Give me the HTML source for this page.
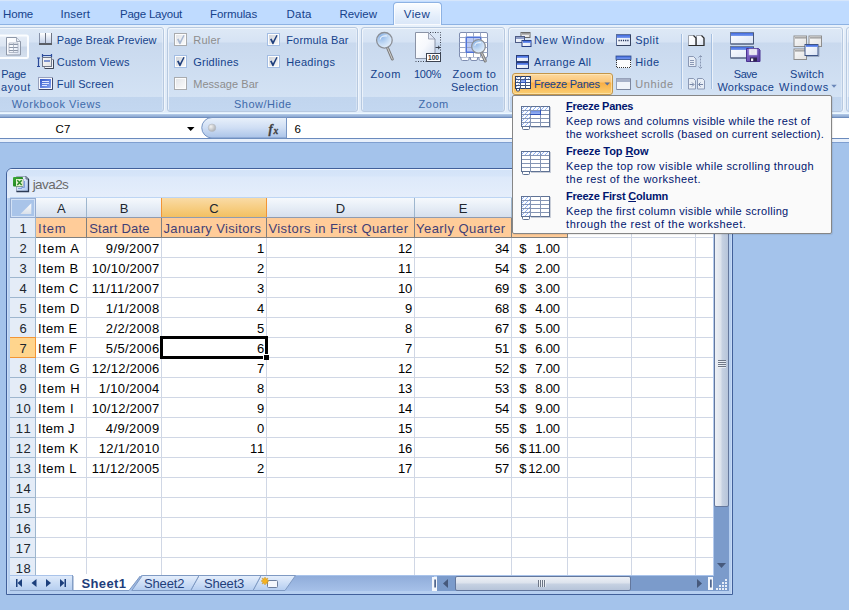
<!DOCTYPE html>
<html><head><meta charset="utf-8"><title>Excel</title>
<style>
*{box-sizing:border-box;margin:0;padding:0}
html,body{width:849px;height:610px;overflow:hidden}
body{position:relative;background:#a4c3eb;font-family:"Liberation Sans",sans-serif;font-size:11px;color:#15428b}
.a{position:absolute}
.t{position:absolute;white-space:nowrap;z-index:3}
svg{position:absolute;overflow:visible}
#tabs{left:0;top:0;width:849px;height:25px;background:linear-gradient(#d6e6fb 0,#d6e6fb 1px,#c3ddff 1px,#bfdbff 3px,#bfdbff 100%)}
#vtab{left:393px;top:2px;width:49px;height:23px;border:1px solid #8db2e3;border-bottom:none;border-radius:4px 4px 0 0;background:linear-gradient(#fbfdff,#e4eefb 60%,#d9e6f7);box-shadow:inset 0 0 0 1px rgba(255,255,255,.8)}
#ribbon{left:0;top:24px;width:849px;height:89px;background:linear-gradient(#e8f1fb,#dfeaf8 20px,#e1ecf9);border-top:1px solid #8db2e3}
.grp{position:absolute;top:27px;height:85px;border:1px solid #b7c9e0;border-radius:3px;background:linear-gradient(#dee9f6 0,#d6e3f4 14px,#c9d9ee 15px,#d3e2f4 69px,#c1d5ee 69px,#c3d7f0 100%);box-shadow:inset 1px 1px 0 rgba(255,255,255,.6),inset -1px 0 0 rgba(255,255,255,.3),1px 0 0 rgba(255,255,255,.55)}
#below{left:0;top:112px;width:849px;height:6px;background:linear-gradient(#e3effd 0,#e3effd 1px,#ecf8ff 1px,#ecf8ff 2px,#b9cfec 2px,#a3bcdf 3px,#8ba7d0 5px,#6f8ebf 5px,#6f8ebf 6px)}
#fbar{left:0;top:118px;width:849px;height:25px;background:#fff;border-bottom:1px solid #7f9fd0;box-shadow:inset 0 -3px 0 #e8f0fb,inset 0 -4px 0 #6a8abd}
.cb{position:absolute;width:13px;height:13px;border:1px solid #8e8f8f;background:linear-gradient(135deg,#dcdfe3,#f6f6f6);box-shadow:inset 0 0 0 1px #f4f4f4, inset 0 0 0 2px #d3d8de}
.cb.dis{border-color:#b8bcc2}
.sep{position:absolute;width:1px;top:34px;height:55px;background:#a5bfe0;box-shadow:1px 0 0 rgba(255,255,255,.6)}
#win{left:6px;top:168px;width:727px;height:427px;border:1px solid #41609a;border-radius:6px 6px 0 0;background:#b6cff0;box-shadow:inset 1px 0 0 #c6daf6,inset -1px 0 0 #c6daf6}
#title{left:7px;top:169px;width:725px;height:29px;border-radius:5px 5px 0 0;background:linear-gradient(#f0f5fd 0,#f0f5fd 1px,#d3e3f8 1px,#d6e5f9 7px,#dde9fa 8px,#e5eefb 28px)}
#grid{left:10px;top:197px;width:704px;height:378px;background:#fff;overflow:hidden}
#menu{left:512px;top:95px;width:320px;height:139px;background:#fafafa;border:1px solid #868686;border-radius:2px;z-index:4;box-shadow:1px 1px 1px rgba(0,0,0,.08)}
#fz{left:512px;top:73px;width:101px;height:22px;border:1px solid #c3964a;border-radius:3px;background:linear-gradient(#fcd9a0 0,#fbc678 8px,#f9ae45 9px,#fbcf74 100%);box-shadow:inset 0 0 0 1px rgba(255,240,200,.55)}
</style></head><body>
<div id="tabs" class="a"></div>
<div id="ribbon" class="a"></div>
<div id="vtab" class="a"></div>
<!-- groups -->
<div class="grp" style="left:-6px;width:170px"></div>
<div class="grp" style="left:167px;width:191px"></div>
<div class="grp" style="left:361px;width:144px"></div>
<div class="grp" style="left:508px;width:335px"></div>
<div class="grp" style="left:846px;width:40px"></div>
<div id="fz" class="a"></div>
<!-- checkboxes -->
<div class="sep" style="left:681px"></div>
<div class="sep" style="left:711px"></div>
<svg width="849" height="120" viewBox="0 0 849 120" style="left:0;top:0;z-index:2">
<defs>
<linearGradient id="tbl" x1="0" y1="0" x2="0" y2="1"><stop offset="0" stop-color="#3f68dd"/><stop offset="1" stop-color="#7c9df0"/></linearGradient>
<linearGradient id="tbg" x1="0" y1="0" x2="0" y2="1"><stop offset="0" stop-color="#8d8d8d"/><stop offset="1" stop-color="#c4c4c4"/></linearGradient>
<linearGradient id="wb" x1="0" y1="0" x2="1" y2="1"><stop offset="0" stop-color="#ffffff"/><stop offset="1" stop-color="#d9e3f5"/></linearGradient>
<linearGradient id="wbg" x1="0" y1="0" x2="1" y2="1"><stop offset="0" stop-color="#fafafa"/><stop offset="1" stop-color="#e2e2e2"/></linearGradient>
<linearGradient id="pg" x1="0" y1="0" x2="1" y2="1"><stop offset="0" stop-color="#ffffff"/><stop offset="0.5" stop-color="#f7f9fd"/><stop offset="1" stop-color="#d5dff0"/></linearGradient>
<radialGradient id="lens" cx="0.3" cy="0.25" r="0.9"><stop offset="0" stop-color="#8db5e8"/><stop offset="0.55" stop-color="#c6dcf5"/><stop offset="1" stop-color="#eef5fd"/></radialGradient>
<linearGradient id="fsb" x1="0" y1="0" x2="1" y2="1"><stop offset="0" stop-color="#3558c8"/><stop offset="1" stop-color="#86a6f2"/></linearGradient>
<linearGradient id="bluecell" x1="0" y1="0" x2="0" y2="1"><stop offset="0" stop-color="#5f84e6"/><stop offset="1" stop-color="#a9c0f5"/></linearGradient>
<linearGradient id="plb" x1="0" y1="0" x2="0" y2="1"><stop offset="0" stop-color="#e6edf7"/><stop offset="0.48" stop-color="#dbe5f2"/><stop offset="0.5" stop-color="#c9d6e8"/><stop offset="1" stop-color="#d6e1ef"/></linearGradient>
<pattern id="hat" width="4" height="4" patternUnits="userSpaceOnUse"><rect width="4" height="4" fill="#fafcff"/><path d="M-1 5 L5 -1 M-1 1 L1 -1 M3 5 L5 3" stroke="#86a8f0" stroke-width="0.9" shape-rendering="geometricPrecision"/></pattern>
<linearGradient id="pbp" x1="0" y1="0" x2="0" y2="1"><stop offset="0" stop-color="#ffffff"/><stop offset="1" stop-color="#c3d0e8"/></linearGradient>
<linearGradient id="flop" x1="0" y1="0" x2="1" y2="1"><stop offset="0" stop-color="#8a6fd0"/><stop offset="1" stop-color="#5a3fa0"/></linearGradient>
<linearGradient id="cbg" x1="0" y1="0" x2="1" y2="1"><stop offset="0" stop-color="#cfd3da"/><stop offset="1" stop-color="#f7f7f7"/></linearGradient>
</defs>
<rect x="-4" y="35.5" width="32" height="22.5" fill="url(#plb)" stroke="#fbfdff" stroke-width="2" rx="1.5"/>
<path d="M6.5 37.5 h10 l4 4 v13.5 h-14 z" fill="url(#pg)" stroke="#8d97a8"/>
<path d="M16.5 37.5 v4 h4" fill="#e6ebf3" stroke="#8d97a8" stroke-width=".8"/>
<path d="M9 44.5 H18" stroke="#8c96a8" stroke-width="1"/>
<path d="M9 47.5 H18" stroke="#8c96a8" stroke-width="1"/>
<path d="M9 50.5 H18" stroke="#8c96a8" stroke-width="1"/>
<path d="M9 43 V52.5 M13.5 43 V52.5 M18 43 V52.5 M9 43 H18 M9 52.5 H18" stroke="#a3acbc" stroke-width=".8" fill="none"/>
<rect x="39" y="33" width="13" height="12" fill="#6d7484" shape-rendering="crispEdges"/>
<rect x="40" y="33" width="5" height="10" fill="url(#pbp)" shape-rendering="crispEdges"/>
<rect x="46" y="33" width="5" height="10" fill="url(#pbp)" shape-rendering="crispEdges"/>
<rect x="39" y="43" width="13" height="2" fill="#5a5e66" shape-rendering="crispEdges"/>
<rect x="39" y="33" width="1" height="10" fill="#8792a8" shape-rendering="crispEdges"/>
<path d="M38.5 58 v8.5 M37 58 h3 M37 66.5 h3" stroke="#2b4a9a" stroke-width="1.2" fill="none"/>
<path d="M42.5 55.5 h9 M42.5 54 v3 M51.5 54 v3" stroke="#2b4a9a" stroke-width="1.2" fill="none"/>
<rect x="44.5" y="59.5" width="9" height="9" fill="#f2f4f8" stroke="#8d95a6" stroke-width="1"/>
<path d="M53.5 60 V68.5 H45" stroke="#3e4657" fill="none"/>
<rect x="42.5" y="57.5" width="9" height="9" fill="url(#wbg)" stroke="#6f7788" stroke-width="1"/>
<rect x="44" y="60" width="6" height="2" fill="#7f95cf" shape-rendering="crispEdges"/>
<rect x="38.5" y="77.5" width="14" height="12" fill="#f8f9fd" stroke="#97a1bd" stroke-width="1"/>
<path d="M52.5 78 V89.5 H39" stroke="#3f4a6e" fill="none"/>
<rect x="40" y="79" width="11" height="9" fill="url(#fsb)" shape-rendering="crispEdges"/>
<rect x="42" y="81" width="7" height="1" fill="#dfe8ff" shape-rendering="crispEdges"/>
<rect x="42" y="83" width="7" height="1" fill="#dfe8ff" shape-rendering="crispEdges"/>
<rect x="42" y="85" width="5" height="1" fill="#dfe8ff" shape-rendering="crispEdges"/>
<rect x="174.5" y="33.5" width="12" height="12" fill="#fdfdfd" stroke="#a9abae" stroke-width="1"/><rect x="176" y="35" width="9" height="9" fill="url(#cbg)" shape-rendering="crispEdges" opacity=".55"/><path d="M177 39.2 l1.6 -0.6 l1.4 2.6 l3.4 -6.2 l1.2 0.6 l-4.2 8.6 h-0.9 z" fill="#aab9d2"/>
<rect x="174.5" y="55.5" width="12" height="12" fill="#fdfdfd" stroke="#a3bde3" stroke-width="1"/><rect x="176" y="57" width="9" height="9" fill="url(#cbg)" shape-rendering="crispEdges"/><path d="M177 61.2 l1.6 -0.6 l1.4 2.6 l3.4 -6.2 l1.2 0.6 l-4.2 8.6 h-0.9 z" fill="#1f3f7d"/>
<rect x="174.5" y="77.5" width="12" height="12" fill="#fdfdfd" stroke="#a9abae" stroke-width="1"/><rect x="176" y="79" width="9" height="9" fill="url(#cbg)" shape-rendering="crispEdges" opacity=".55"/>
<rect x="267.5" y="33.5" width="12" height="12" fill="#fdfdfd" stroke="#a3bde3" stroke-width="1"/><rect x="269" y="35" width="9" height="9" fill="url(#cbg)" shape-rendering="crispEdges"/><path d="M270 39.2 l1.6 -0.6 l1.4 2.6 l3.4 -6.2 l1.2 0.6 l-4.2 8.6 h-0.9 z" fill="#1f3f7d"/>
<rect x="267.5" y="55.5" width="12" height="12" fill="#fdfdfd" stroke="#a3bde3" stroke-width="1"/><rect x="269" y="57" width="9" height="9" fill="url(#cbg)" shape-rendering="crispEdges"/><path d="M270 61.2 l1.6 -0.6 l1.4 2.6 l3.4 -6.2 l1.2 0.6 l-4.2 8.6 h-0.9 z" fill="#1f3f7d"/>
<path d="M387.4 47.5 L392.3 59" stroke="#7d7d7d" stroke-width="3" stroke-linecap="round"/><path d="M387.4 47.5 L392.3 59" stroke="#d0d0d0" stroke-width="1" stroke-linecap="round"/><circle cx="384.4" cy="40.3" r="7.8" fill="url(#lens)" stroke="#8b8f96" stroke-width="1.3"/><path d="M380.1 39.5 Q380.5 35.2 387.1 36.0" stroke="#fff" stroke-width="1.2" fill="none" opacity=".75"/>
<path d="M415.5 32.5 h13 l6.5 6.5 v19.5 h-19.5 z" fill="url(#pg)" stroke="#8a93a6"/>
<path d="M428.5 32.5 v6.5 h6.5 z" fill="#e1e8f5" stroke="#8a93a6" stroke-width=".8"/>
<path d="M430 32.5 H440.5 V53" stroke="#3c4350" stroke-width="1" stroke-dasharray="1 1.5" fill="none"/>
<path d="M415.5 61.5 H426" stroke="#3c4350" stroke-width="1" stroke-dasharray="1 1.5" fill="none"/>
<path d="M435.5 47.5 h4.5 M438 45.8 l1.8 1.7 -1.8 1.7" stroke="#3c4350" stroke-width="1" fill="none"/>
<rect x="426.5" y="53.5" width="14" height="8" fill="#fff" stroke="#3c4350" stroke-width="1"/>
<text x="433.5" y="60.3" font-family="Liberation Sans, sans-serif" font-size="7" font-weight="bold" fill="#2a2f3a" text-anchor="middle" textLength="11" lengthAdjust="spacingAndGlyphs">100</text>
<rect x="459.5" y="32.5" width="28" height="25" fill="#fff" stroke="#7e8db0" stroke-width="1" rx="1.5"/>
<rect x="466" y="37" width="15" height="15" fill="#b9c9f5" stroke="#4f73d9" stroke-width="1"/>
<path d="M466.5 32.5 V57.5" stroke="#9aa7c4" stroke-width="1"/>
<path d="M473.5 32.5 V57.5" stroke="#9aa7c4" stroke-width="1"/>
<path d="M480.5 32.5 V57.5" stroke="#9aa7c4" stroke-width="1"/>
<path d="M459.5 37.5 H487.5" stroke="#9aa7c4" stroke-width="1"/>
<path d="M459.5 42.5 H487.5" stroke="#9aa7c4" stroke-width="1"/>
<path d="M459.5 47.5 H487.5" stroke="#9aa7c4" stroke-width="1"/>
<path d="M459.5 52.5 H487.5" stroke="#9aa7c4" stroke-width="1"/>
<rect x="466.5" y="37.5" width="14" height="15" fill="none" stroke="#4f73d9" stroke-width="1"/>
<path d="M461 57.5 v1.5 q0 1.5 1.5 1.5 h5 q1.5 0 1.5 -1.5 v-1.5 M470.5 57.5 v1.5 q0 1.5 1.5 1.5 h4 q1.5 0 1.5 -1.5 v-1.5 M479 57.5 v1.5 q0 1.5 1.5 1.5 h4 q1.5 0 1.5 -1.5 v-1.5" fill="#fff" stroke="#7e8db0"/>
<path d="M481.4 52.6 L485.3 61" stroke="#7d7d7d" stroke-width="3" stroke-linecap="round"/><path d="M481.4 52.6 L485.3 61" stroke="#d0d0d0" stroke-width="1" stroke-linecap="round"/><circle cx="478.5" cy="46.4" r="6.8" fill="url(#lens)" stroke="#8b8f96" stroke-width="1.3"/><path d="M474.8 45.7 Q475.1 42.0 480.9 42.7" stroke="#fff" stroke-width="1.2" fill="none" opacity=".75"/>
<g><rect x="521.0" y="32.5" width="9" height="5" fill="url(#wbg)" stroke="#6b6b6b" stroke-width="1"/><rect x="521.5" y="33" width="8" height="2" fill="url(#tbg)" shape-rendering="crispEdges"/></g>
<g><rect x="515.5" y="36.5" width="9" height="6" fill="url(#wb)" stroke="#4d5c86" stroke-width="1"/><rect x="516" y="37" width="8" height="2" fill="#8f9fc8" shape-rendering="crispEdges"/></g>
<g><rect x="522.0" y="40.5" width="9" height="6" fill="url(#wb)" stroke="#263f86" stroke-width="1"/><rect x="522.5" y="41" width="8" height="2" fill="url(#tbl)" shape-rendering="crispEdges"/></g>
<g><rect x="516.5" y="55.5" width="12" height="6" fill="url(#wb)" stroke="#2a3f7a" stroke-width="1"/><rect x="517" y="56" width="11" height="2" fill="url(#tbl)" shape-rendering="crispEdges"/></g>
<g><rect x="516.5" y="62.5" width="12" height="6" fill="url(#wb)" stroke="#2a3f7a" stroke-width="1"/><rect x="517" y="63" width="11" height="2" fill="url(#tbl)" shape-rendering="crispEdges"/></g>
<g transform="translate(515,76)" shape-rendering="crispEdges"><rect x="0" y="0" width="16" height="13" fill="#fff"/><rect x="0" y="0" width="16" height="3" fill="url(#hat)"/><rect x="0" y="0" width="5" height="13" fill="url(#hat)"/><rect x="5" y="3" width="6" height="4" fill="url(#bluecell)"/><rect x="0" y="0" width="16" height="1" fill="#2a3d66"/><rect x="0" y="3" width="16" height="1" fill="#46587f"/><rect x="0" y="6" width="16" height="1" fill="#46587f"/><rect x="0" y="9" width="16" height="1" fill="#46587f"/><rect x="0" y="12" width="16" height="1" fill="#2a3d66"/><rect x="0" y="0" width="1" height="13" fill="#2a3d66"/><rect x="5" y="0" width="1" height="13" fill="#46587f"/><rect x="10" y="0" width="1" height="13" fill="#46587f"/><rect x="15" y="0" width="1" height="13" fill="#2a3d66"/><rect x="5" y="6" width="6" height="1" fill="#3355b8"/><rect x="10" y="3" width="1" height="4" fill="#3355b8"/><path d="M1.5 13 v1.0 q0 1 1 1 h1 q1 0 1 -1 v-1.0" fill="#fff" stroke="#2a3d66" shape-rendering="geometricPrecision"/></g>
<polygon points="604.5,82.5 610,82.5 607.25,85.5" fill="#56709f"/>
<g><rect x="616.5" y="34.5" width="14" height="11" fill="url(#wb)" stroke="#5b6f9c" stroke-width="1"/><rect x="617" y="35" width="13" height="3" fill="url(#tbl)" shape-rendering="crispEdges"/><path d="M630.5 35 V45.5 H617" stroke="#36425f" fill="none"/></g>
<path d="M618.5 40.5 H629" stroke="#1d2c55" stroke-width="1.3" stroke-dasharray="1.2 1"/>
<rect x="616" y="56" width="15" height="3.5" fill="url(#tbl)" stroke="#2f4c8a" stroke-width="0.8"/>
<path d="M616.5 60 V67.5 H630.5 V60" stroke="#333" stroke-width="1" stroke-dasharray="1 1" fill="#fcfcfd" shape-rendering="crispEdges"/>
<g><rect x="616.5" y="78.5" width="14" height="11" fill="#f1f4fa" stroke="#97a2ba" stroke-width="1"/><rect x="617" y="79" width="13" height="3" fill="#a7b1c8" shape-rendering="crispEdges"/><path d="M630.5 79 V89.5 H617" stroke="#7c879f" fill="none"/></g>
<path d="M688.5 35.5 h5 l2.5 2.5 v7.5 h-7.5 z M696.5 35.5 h5 l2.5 2.5 v7.5 h-7.5 z" fill="url(#pg)" stroke="#8a8f99" stroke-width=".8"/>
<path d="M693.5 35.5 l2.5 2.5 v7.5 h-7.5 M701.5 35.5 l2.5 2.5 v7.5 h-7.5" fill="none" stroke="#2e2e2e" stroke-width="1.2"/>
<g opacity=".8"><path d="M688.5 56.5 h5 l2.5 2.5 v7.5 h-7.5 z" fill="#eef2f8" stroke="#7a88a6"/><path d="M690 60.5 h4 M690 62.5 h4 M690 64.5 h4" stroke="#7a88a6"/><path d="M700.5 55.5 V68.5 M698.5 57.5 l2 -2 2 2 M698.5 66.5 l2 2 2 -2" stroke="#7a88a6" fill="none" stroke-dasharray="2 1"/></g>
<g opacity=".8"><path d="M688.5 78.5 h5 l2 2 v8.5 h-7 z M697.5 78.5 h5 l2 2 v8.5 h-7 z" fill="#eef2f8" stroke="#7a88a6"/><path d="M689.5 84.5 h4 M692 82.5 l2 2 -2 2 M703 84.5 h-4 M700.5 82.5 l-2 2 2 2" stroke="#5f6f92" fill="none"/></g>
<g><rect x="730.5" y="32.5" width="23" height="11.5" fill="url(#wb)" stroke="#6a7a9a" stroke-width="1"/><rect x="731" y="33" width="22" height="3" fill="url(#tbl)" shape-rendering="crispEdges"/><path d="M753.5 33 V44.0 H731" stroke="#4a5877" fill="none"/></g>
<g><rect x="730.5" y="46.5" width="23" height="11.5" fill="url(#wb)" stroke="#6a7a9a" stroke-width="1"/><rect x="731" y="47" width="22" height="3" fill="url(#tbl)" shape-rendering="crispEdges"/><path d="M753.5 47 V58.0 H731" stroke="#4a5877" fill="none"/></g>
<path d="M746.5 48.5 h12 l1.5 1.5 v11.5 h-13.5 z" fill="url(#flop)" stroke="#4a3290"/>
<rect x="749" y="49" width="8" height="6" fill="#f6f4fb" stroke="#b9aee0" stroke-width="0.6"/>
<path d="M750.5 51 h5 M750.5 53 h5" stroke="#c9c4dc" stroke-width=".7"/>
<rect x="750" y="57.5" width="7" height="4" fill="#2e2350"/>
<rect x="751" y="58.5" width="2.2" height="2.6" fill="#f4f2fa"/>
<g><rect x="794.0" y="36.0" width="12.5" height="10.5" fill="url(#wbg)" stroke="#8e8e8e" stroke-width="1"/><rect x="794.5" y="36.5" width="11.5" height="2" fill="url(#tbg)" shape-rendering="crispEdges"/></g>
<g><rect x="809.0" y="36.0" width="12.5" height="10.5" fill="url(#wbg)" stroke="#8e8e8e" stroke-width="1"/><rect x="809.5" y="36.5" width="11.5" height="2" fill="url(#tbg)" shape-rendering="crispEdges"/></g>
<g><rect x="794.0" y="49.0" width="12.5" height="10.5" fill="url(#wbg)" stroke="#8e8e8e" stroke-width="1"/><rect x="794.5" y="49.5" width="11.5" height="2" fill="url(#tbg)" shape-rendering="crispEdges"/></g>
<g><rect x="805.0" y="44.5" width="13" height="11" fill="url(#wb)" stroke="#3d5486" stroke-width="1"/><rect x="805.5" y="45" width="12" height="2" fill="url(#tbl)" shape-rendering="crispEdges"/></g>
<path d="M806 56.5 H819 V45.5" stroke="#6b7894" stroke-width="1" fill="none" opacity=".5"/>
<polygon points="831.3,84.8 836.7,84.8 834,87.8" fill="#6a86b8"/>
</svg>
<div id="below" class="a"></div>
<div id="fbar" class="a"></div>
<svg width="849" height="150" viewBox="0 0 849 150" style="left:0;top:0;z-index:2">
<defs><linearGradient id="pill" x1="0" y1="0" x2="0" y2="1"><stop offset="0" stop-color="#e9f1fb"/><stop offset="0.5" stop-color="#cfdef4"/><stop offset="1" stop-color="#aac3e8"/></linearGradient><radialGradient id="knob" cx=".35" cy=".35" r=".8"><stop offset="0" stop-color="#f2f2f2"/><stop offset="1" stop-color="#a0a4aa"/></radialGradient></defs>
<polygon points="187,127 194.5,127 190.7,131" fill="#000"/>
<path d="M286.5 117.5 H212 a10 10 0 0 0 0 20.5 H286.5 z" fill="url(#pill)" stroke="#7795c4"/>
<circle cx="212" cy="127.8" r="3.8" fill="url(#knob)" stroke="#b4bac4" stroke-width=".6"/>
<text x="268.5" y="132.5" font-family="Liberation Serif, serif" font-style="italic" font-weight="bold" font-size="12.5" fill="#3f3f3f" stroke="#3f3f3f" stroke-width=".3">f</text>
<text x="273.5" y="133.5" font-family="Liberation Serif, serif" font-style="italic" font-weight="bold" font-size="9.5" fill="#3f3f3f" stroke="#3f3f3f" stroke-width=".3">x</text>
</svg>
<div id="win" class="a"></div>
<div id="title" class="a"></div>
<div id="grid" class="a">
<svg width="704" height="379" viewBox="0 0 704 379" shape-rendering="crispEdges" style="left:0;top:0">
<defs><linearGradient id="hg" x1="0" y1="0" x2="0" y2="1"><stop offset="0" stop-color="#f7fafd"/><stop offset="0.5" stop-color="#e6edf6"/><stop offset="1" stop-color="#d5deeb"/></linearGradient><linearGradient id="og" x1="0" y1="0" x2="0" y2="1"><stop offset="0" stop-color="#f9dba6"/><stop offset="0.45" stop-color="#f7cf86"/><stop offset="1" stop-color="#f2c062"/></linearGradient><linearGradient id="cg" x1="0" y1="0" x2="1" y2="1"><stop offset="0" stop-color="#a9c4e9"/><stop offset="1" stop-color="#b9cfee"/></linearGradient><linearGradient id="tri" x1="0" y1="0" x2="0" y2="1"><stop offset="0" stop-color="#fdfdfe"/><stop offset="1" stop-color="#d9e0ea"/></linearGradient></defs>
<rect x="76" y="21" width="1" height="379" fill="#d0d7e5"/>
<rect x="151" y="21" width="1" height="379" fill="#d0d7e5"/>
<rect x="256" y="21" width="1" height="379" fill="#d0d7e5"/>
<rect x="404" y="21" width="1" height="379" fill="#d0d7e5"/>
<rect x="501" y="21" width="1" height="379" fill="#d0d7e5"/>
<rect x="557" y="21" width="1" height="379" fill="#d0d7e5"/>
<rect x="621" y="21" width="1" height="379" fill="#d0d7e5"/>
<rect x="685" y="21" width="1" height="379" fill="#d0d7e5"/>
<rect x="26" y="40" width="704" height="1" fill="#d0d7e5"/>
<rect x="26" y="60" width="704" height="1" fill="#d0d7e5"/>
<rect x="26" y="80" width="704" height="1" fill="#d0d7e5"/>
<rect x="26" y="100" width="704" height="1" fill="#d0d7e5"/>
<rect x="26" y="120" width="704" height="1" fill="#d0d7e5"/>
<rect x="26" y="140" width="704" height="1" fill="#d0d7e5"/>
<rect x="26" y="160" width="704" height="1" fill="#d0d7e5"/>
<rect x="26" y="180" width="704" height="1" fill="#d0d7e5"/>
<rect x="26" y="200" width="704" height="1" fill="#d0d7e5"/>
<rect x="26" y="220" width="704" height="1" fill="#d0d7e5"/>
<rect x="26" y="240" width="704" height="1" fill="#d0d7e5"/>
<rect x="26" y="260" width="704" height="1" fill="#d0d7e5"/>
<rect x="26" y="280" width="704" height="1" fill="#d0d7e5"/>
<rect x="26" y="300" width="704" height="1" fill="#d0d7e5"/>
<rect x="26" y="320" width="704" height="1" fill="#d0d7e5"/>
<rect x="26" y="340" width="704" height="1" fill="#d0d7e5"/>
<rect x="26" y="360" width="704" height="1" fill="#d0d7e5"/>
<rect x="0" y="0" width="704" height="21" fill="url(#hg)"/>
<rect x="0" y="0" width="704" height="1" fill="#bdd5f3"/>
<rect x="0" y="20" width="704" height="1" fill="#9eb6ce"/>
<rect x="25" y="1" width="1" height="19" fill="#9eb6ce"/>
<rect x="76" y="1" width="1" height="19" fill="#9eb6ce"/>
<rect x="151" y="1" width="1" height="19" fill="#9eb6ce"/>
<rect x="256" y="1" width="1" height="19" fill="#9eb6ce"/>
<rect x="404" y="1" width="1" height="19" fill="#9eb6ce"/>
<rect x="501" y="1" width="1" height="19" fill="#9eb6ce"/>
<rect x="557" y="1" width="1" height="19" fill="#9eb6ce"/>
<rect x="621" y="1" width="1" height="19" fill="#9eb6ce"/>
<rect x="685" y="1" width="1" height="19" fill="#9eb6ce"/>
<rect x="0" y="1" width="26" height="20" fill="#95acd1"/>
<rect x="1" y="2" width="24" height="18" fill="#d3e2f6"/>
<rect x="2" y="3" width="22" height="16" fill="#a9c4e9"/>
<polygon points="21.3,6.199999999999989 21.3,17 10.399999999999999,17" fill="url(#tri)" shape-rendering="geometricPrecision"/>
<rect x="152" y="1" width="105" height="19" fill="url(#og)"/>
<rect x="151" y="1" width="1" height="20" fill="#f29536"/>
<rect x="256" y="1" width="1" height="20" fill="#f29536"/>
<rect x="151" y="20" width="106" height="1" fill="#f29536"/>
<rect x="0" y="21" width="25" height="379" fill="#e4ecf7"/>
<rect x="25" y="21" width="1" height="379" fill="#9eb6ce"/>
<rect x="0" y="40" width="26" height="1" fill="#9eb6ce"/>
<rect x="0" y="60" width="26" height="1" fill="#9eb6ce"/>
<rect x="0" y="80" width="26" height="1" fill="#9eb6ce"/>
<rect x="0" y="100" width="26" height="1" fill="#9eb6ce"/>
<rect x="0" y="120" width="26" height="1" fill="#9eb6ce"/>
<rect x="0" y="140" width="26" height="1" fill="#9eb6ce"/>
<rect x="0" y="160" width="26" height="1" fill="#9eb6ce"/>
<rect x="0" y="180" width="26" height="1" fill="#9eb6ce"/>
<rect x="0" y="200" width="26" height="1" fill="#9eb6ce"/>
<rect x="0" y="220" width="26" height="1" fill="#9eb6ce"/>
<rect x="0" y="240" width="26" height="1" fill="#9eb6ce"/>
<rect x="0" y="260" width="26" height="1" fill="#9eb6ce"/>
<rect x="0" y="280" width="26" height="1" fill="#9eb6ce"/>
<rect x="0" y="300" width="26" height="1" fill="#9eb6ce"/>
<rect x="0" y="320" width="26" height="1" fill="#9eb6ce"/>
<rect x="0" y="340" width="26" height="1" fill="#9eb6ce"/>
<rect x="0" y="360" width="26" height="1" fill="#9eb6ce"/>
<rect x="0" y="141" width="25" height="19" fill="#ffd58d"/>
<rect x="0" y="140" width="26" height="1" fill="#f29536"/>
<rect x="0" y="160" width="26" height="1" fill="#f29536"/>
<rect x="25" y="140" width="1" height="21" fill="#f29536"/>
<rect x="26" y="21" width="531" height="19" fill="#ffcc99"/>
<rect x="26" y="40" width="532" height="1" fill="#7f7f7f"/>
<rect x="76" y="21" width="1" height="20" fill="#7f7f7f"/>
<rect x="151" y="21" width="1" height="20" fill="#7f7f7f"/>
<rect x="256" y="21" width="1" height="20" fill="#7f7f7f"/>
<rect x="404" y="21" width="1" height="20" fill="#7f7f7f"/>
<rect x="501" y="21" width="1" height="20" fill="#7f7f7f"/>
<rect x="557" y="21" width="1" height="20" fill="#7f7f7f"/>
<rect x="26" y="20" width="532" height="1" fill="#8f9bb0"/>
<rect x="150" y="139" width="108" height="3" fill="#000"/>
<rect x="150" y="159" width="108" height="3" fill="#000"/>
<rect x="150" y="139" width="3" height="23" fill="#000"/>
<rect x="255" y="139" width="3" height="23" fill="#000"/>
<rect x="253" y="157" width="6" height="6" fill="#fff"/>
<rect x="254" y="158" width="5" height="5" fill="#000"/>
</svg>
</div>
<svg width="849" height="610" viewBox="0 0 849 610" style="left:0;top:0;z-index:2">
<defs>
<linearGradient id="vth" x1="0" y1="0" x2="1" y2="0"><stop offset="0" stop-color="#eef1f6"/><stop offset="0.45" stop-color="#dde3ed"/><stop offset="0.55" stop-color="#c6d1e2"/><stop offset="1" stop-color="#b5c3d9"/></linearGradient>
<linearGradient id="hth" x1="0" y1="0" x2="0" y2="1"><stop offset="0" stop-color="#eef1f6"/><stop offset="0.45" stop-color="#dde3ed"/><stop offset="0.55" stop-color="#c6d1e2"/><stop offset="1" stop-color="#b5c3d9"/></linearGradient>
<linearGradient id="tabg" x1="0" y1="0" x2="0" y2="1"><stop offset="0" stop-color="#e6effc"/><stop offset="1" stop-color="#b4cdf0"/></linearGradient>
<linearGradient id="navg" x1="0" y1="0" x2="0" y2="1"><stop offset="0" stop-color="#dfeafa"/><stop offset="0.5" stop-color="#c9dcf5"/><stop offset="1" stop-color="#b7cff0"/></linearGradient>
<linearGradient id="tbarg" x1="0" y1="0" x2="0" y2="1"><stop offset="0" stop-color="#8eabd9"/><stop offset="1" stop-color="#a6c1e9"/></linearGradient>
</defs>
<rect x="714" y="197" width="15" height="378" fill="#7b9bcb" shape-rendering="crispEdges"/>
<rect x="713" y="197" width="1" height="378" fill="#b4cbee" shape-rendering="crispEdges"/>
<rect x="714.5" y="214.5" width="14" height="292" rx="1.5" fill="url(#vth)" stroke="#63779d"/>
<rect x="718" y="360" width="8" height="1" fill="#6e7686" shape-rendering="crispEdges"/><rect x="718" y="361" width="8" height="1" fill="#f4f6f9" opacity=".7" shape-rendering="crispEdges"/>
<rect x="718" y="362" width="8" height="1" fill="#6e7686" shape-rendering="crispEdges"/><rect x="718" y="363" width="8" height="1" fill="#f4f6f9" opacity=".7" shape-rendering="crispEdges"/>
<rect x="718" y="364" width="8" height="1" fill="#6e7686" shape-rendering="crispEdges"/><rect x="718" y="365" width="8" height="1" fill="#f4f6f9" opacity=".7" shape-rendering="crispEdges"/>
<rect x="718" y="366" width="8" height="1" fill="#6e7686" shape-rendering="crispEdges"/><rect x="718" y="367" width="8" height="1" fill="#f4f6f9" opacity=".7" shape-rendering="crispEdges"/>
<polygon points="717,563 726,563 721.5,568" fill="#46597c"/>
<rect x="10" y="575" width="424" height="16" fill="url(#tbarg)" shape-rendering="crispEdges"/><rect x="10" y="575" width="704" height="1" fill="#a9c3ea" shape-rendering="crispEdges"/>
<rect x="10" y="576" width="62" height="14" fill="url(#navg)" shape-rendering="crispEdges"/><rect x="72" y="575" width="1" height="16" fill="#8aa3c9" shape-rendering="crispEdges"/><rect x="10" y="590" width="63" height="1" fill="#8aa3c9" shape-rendering="crispEdges"/>
<rect x="16" y="579" width="1.5" height="8" fill="#1c3f7c"/><polygon points="22,579 22,587 17.5,583" fill="#1c3f7c"/>
<polygon points="36.5,579 36.5,587 31.5,583" fill="#1c3f7c"/>
<polygon points="46,579 46,587 51,583" fill="#1c3f7c"/>
<polygon points="60,579 60,587 64.5,583" fill="#1c3f7c"/><rect x="64.5" y="579" width="1.5" height="8" fill="#1c3f7c"/>
<polygon points="253,590.5 261,575.5 295.5,575.5 285,590.5" fill="url(#tabg)" stroke="#7f9ac3" stroke-width="1" stroke-linejoin="round"/>
<polygon points="190.7,590.5 199,575.5 261,575.5 253,590.5" fill="url(#tabg)" stroke="#7f9ac3" stroke-width="1" stroke-linejoin="round"/>
<polygon points="131.8,590.5 142.4,575.5 199,575.5 190.7,590.5" fill="url(#tabg)" stroke="#7f9ac3" stroke-width="1" stroke-linejoin="round"/>
<polygon points="73,575 141,575 129,590.5 73,590.5" fill="#fff" stroke="#7f9ac3" stroke-width="1"/>
<rect x="73" y="574" width="68" height="2" fill="#fff" shape-rendering="crispEdges"/>
<rect x="267.5" y="580.5" width="10" height="7" rx="1" fill="#f4f7fc" stroke="#6d7f9e"/><path d="M265 577 l1 2 2-1 -1 2 2 1 -2 1 1 2 -2-1 -1 2 -1-2 -2 1 1-2 -2-1 2-1 -1-2 2 1z" fill="#f5b21e" stroke="#c98a10" stroke-width=".4"/>
<rect x="437" y="576" width="277" height="15" fill="#7b9bcb" shape-rendering="crispEdges"/>
<rect x="432" y="577" width="5" height="14" fill="#f4f7fc" shape-rendering="crispEdges"/><rect x="434.4" y="579.5" width="1.4" height="8" fill="#2a4475"/>
<polygon points="448,579 448,588 443,583.5" fill="#46597c"/>
<rect x="455.5" y="576.5" width="175" height="14" rx="1.5" fill="url(#hth)" stroke="#63779d"/>
<rect x="538" y="580" width="1" height="7" fill="#6e7686" shape-rendering="crispEdges"/><rect x="539" y="580" width="1" height="7" fill="#f4f6f9" opacity=".7" shape-rendering="crispEdges"/>
<rect x="540" y="580" width="1" height="7" fill="#6e7686" shape-rendering="crispEdges"/><rect x="541" y="580" width="1" height="7" fill="#f4f6f9" opacity=".7" shape-rendering="crispEdges"/>
<rect x="542" y="580" width="1" height="7" fill="#6e7686" shape-rendering="crispEdges"/><rect x="543" y="580" width="1" height="7" fill="#f4f6f9" opacity=".7" shape-rendering="crispEdges"/>
<rect x="544" y="580" width="1" height="7" fill="#6e7686" shape-rendering="crispEdges"/><rect x="545" y="580" width="1" height="7" fill="#f4f6f9" opacity=".7" shape-rendering="crispEdges"/>
<polygon points="697,579 697,588 702,583.5" fill="#46597c"/>
<rect x="708" y="577" width="5" height="13" fill="#f4f7fc" shape-rendering="crispEdges"/><rect x="710.2" y="579.5" width="1.4" height="8" fill="#2a4475"/>
<rect x="714" y="575" width="15" height="16" fill="#7b9bcb" shape-rendering="crispEdges"/>
<rect x="725" y="579" width="2" height="2" fill="#e8eef8" shape-rendering="crispEdges"/>
<rect x="722" y="582" width="2" height="2" fill="#e8eef8" shape-rendering="crispEdges"/>
<rect x="725" y="582" width="2" height="2" fill="#e8eef8" shape-rendering="crispEdges"/>
<rect x="719" y="585" width="2" height="2" fill="#e8eef8" shape-rendering="crispEdges"/>
<rect x="722" y="585" width="2" height="2" fill="#e8eef8" shape-rendering="crispEdges"/>
<rect x="725" y="585" width="2" height="2" fill="#e8eef8" shape-rendering="crispEdges"/>
<rect x="716" y="588" width="2" height="2" fill="#e8eef8" shape-rendering="crispEdges"/>
<rect x="719" y="588" width="2" height="2" fill="#e8eef8" shape-rendering="crispEdges"/>
<rect x="722" y="588" width="2" height="2" fill="#e8eef8" shape-rendering="crispEdges"/>
<rect x="725" y="588" width="2" height="2" fill="#e8eef8" shape-rendering="crispEdges"/>
<defs><linearGradient id="xpg" x1="0" y1="0" x2="1" y2="1"><stop offset="0" stop-color="#ffffff"/><stop offset="1" stop-color="#a9c4f0"/></linearGradient><linearGradient id="xgr" x1="0" y1="0" x2="1" y2="1"><stop offset="0" stop-color="#3fae3a"/><stop offset="1" stop-color="#116d14"/></linearGradient></defs>
<path d="M16.5 176.5 h9.5 l2.5 2.5 v12.5 h-12 z" fill="url(#xpg)" stroke="#8a96ad" stroke-width=".8"/>
<path d="M28.5 179 v12.5 h-12" fill="none" stroke="#2b3a55" stroke-width="1.3"/>
<path d="M26 176.5 l2.5 2.5 h-2.5 z" fill="#dfe8f8" stroke="#2b3a55" stroke-width=".7"/>
<path d="M24.5 181 v6.5 h-3 M18 188.5 h4" stroke="#7fa3df" stroke-width="1" fill="none"/>
<rect x="13" y="177" width="10" height="9.5" rx="1" fill="url(#xgr)"/>
<rect x="16" y="179" width="7" height="7.3" fill="#e4f4cf"/>
<path d="M17.3 180.3 l4.4 4.6 M21.7 180.3 l-4.4 4.6" stroke="#2c8a2a" stroke-width="1.5"/>
<path d="M23.3 179 v7.6 h-7" stroke="#55606f" stroke-width=".6" fill="none" opacity=".7"/>
</svg>
<div id="menu" class="a"></div>
<svg width="849" height="300" viewBox="0 0 849 300" style="left:0;top:0;z-index:5">
<g transform="translate(521,106)" shape-rendering="crispEdges"><rect x="0" y="0" width="29" height="21" fill="#fff"/><rect x="0" y="0" width="29" height="4" fill="url(#hat)"/><rect x="0" y="0" width="9" height="21" fill="url(#hat)"/><rect x="9" y="4" width="11" height="5" fill="url(#bluecell)"/><rect x="0" y="0" width="29" height="1" fill="#5f7294"/><rect x="0" y="4" width="29" height="1" fill="#8595b4"/><rect x="0" y="8" width="29" height="1" fill="#8595b4"/><rect x="0" y="12" width="29" height="1" fill="#8595b4"/><rect x="0" y="16" width="29" height="1" fill="#8595b4"/><rect x="0" y="20" width="29" height="1" fill="#5f7294"/><rect x="0" y="0" width="1" height="21" fill="#5f7294"/><rect x="9" y="0" width="1" height="21" fill="#8595b4"/><rect x="19" y="0" width="1" height="21" fill="#8595b4"/><rect x="28" y="0" width="1" height="21" fill="#5f7294"/><rect x="9" y="8" width="11" height="1" fill="#3355b8"/><rect x="19" y="4" width="1" height="5" fill="#3355b8"/><path d="M1.5 21 v1.5 q0 1 1 1 h5 q1 0 1 -1 v-1.5" fill="#fff" stroke="#5f7294" shape-rendering="geometricPrecision"/><rect x="29" y="1" width="1" height="21" fill="#c9ced8"/><rect x="10" y="21" width="19" height="1" fill="#c9ced8"/></g>
<g transform="translate(521,151)" shape-rendering="crispEdges"><rect x="0" y="0" width="29" height="21" fill="#fff"/><rect x="0" y="0" width="29" height="4" fill="url(#hat)"/><rect x="0" y="0" width="29" height="1" fill="#5f7294"/><rect x="0" y="4" width="29" height="1" fill="#8595b4"/><rect x="0" y="8" width="29" height="1" fill="#8595b4"/><rect x="0" y="12" width="29" height="1" fill="#8595b4"/><rect x="0" y="16" width="29" height="1" fill="#8595b4"/><rect x="0" y="20" width="29" height="1" fill="#5f7294"/><rect x="0" y="0" width="1" height="21" fill="#5f7294"/><rect x="9" y="0" width="1" height="21" fill="#8595b4"/><rect x="19" y="0" width="1" height="21" fill="#8595b4"/><rect x="28" y="0" width="1" height="21" fill="#5f7294"/><path d="M1.5 21 v1.5 q0 1 1 1 h5 q1 0 1 -1 v-1.5" fill="#fff" stroke="#5f7294" shape-rendering="geometricPrecision"/><rect x="29" y="1" width="1" height="21" fill="#c9ced8"/><rect x="10" y="21" width="19" height="1" fill="#c9ced8"/></g>
<g transform="translate(521,196)" shape-rendering="crispEdges"><rect x="0" y="0" width="29" height="21" fill="#fff"/><rect x="0" y="0" width="9" height="21" fill="url(#hat)"/><rect x="0" y="0" width="29" height="1" fill="#5f7294"/><rect x="0" y="4" width="29" height="1" fill="#8595b4"/><rect x="0" y="8" width="29" height="1" fill="#8595b4"/><rect x="0" y="12" width="29" height="1" fill="#8595b4"/><rect x="0" y="16" width="29" height="1" fill="#8595b4"/><rect x="0" y="20" width="29" height="1" fill="#5f7294"/><rect x="0" y="0" width="1" height="21" fill="#5f7294"/><rect x="9" y="0" width="1" height="21" fill="#8595b4"/><rect x="19" y="0" width="1" height="21" fill="#8595b4"/><rect x="28" y="0" width="1" height="21" fill="#5f7294"/><path d="M1.5 21 v1.5 q0 1 1 1 h5 q1 0 1 -1 v-1.5" fill="#fff" stroke="#5f7294" shape-rendering="geometricPrecision"/><rect x="29" y="1" width="1" height="21" fill="#c9ced8"/><rect x="10" y="21" width="19" height="1" fill="#c9ced8"/></g>
</svg>
<div class="t" style="left:3.1px;top:8.5px;font-size:11.5px;line-height:11.5px;letter-spacing:-0.20px;">Home</div>
<div class="t" style="left:60.5px;top:8.5px;font-size:11.5px;line-height:11.5px;letter-spacing:0.13px;">Insert</div>
<div class="t" style="left:120.0px;top:8.5px;font-size:11.5px;line-height:11.5px;letter-spacing:-0.23px;">Page Layout</div>
<div class="t" style="left:210.0px;top:8.5px;font-size:11.5px;line-height:11.5px;letter-spacing:-0.11px;">Formulas</div>
<div class="t" style="left:286.5px;top:8.5px;font-size:11.5px;line-height:11.5px;letter-spacing:0.23px;">Data</div>
<div class="t" style="left:339.5px;top:8.5px;font-size:11.5px;line-height:11.5px;letter-spacing:-0.04px;">Review</div>
<div class="t" style="left:403.8px;top:8.5px;font-size:11.5px;line-height:11.5px;letter-spacing:0.39px;">View</div>
<div class="t" style="left:1.3px;top:69.2px;font-size:11px;line-height:11px;letter-spacing:-0.30px;">Page</div>
<div class="t" style="left:-5.9px;top:81.8px;font-size:11px;line-height:11px;letter-spacing:0.65px;">Layout</div>
<div class="t" style="left:56.8px;top:34.5px;font-size:11px;line-height:11px;">Page Break Preview</div>
<div class="t" style="left:56.8px;top:56.5px;font-size:11px;line-height:11px;letter-spacing:0.24px;">Custom Views</div>
<div class="t" style="left:56.8px;top:78.5px;font-size:11px;line-height:11px;letter-spacing:0.11px;">Full Screen</div>
<div class="t" style="left:11.8px;top:98.7px;font-size:11px;line-height:11px;letter-spacing:0.55px;color:#3e6aaa;">Workbook Views</div>
<div class="t" style="left:193.2px;top:34.5px;font-size:11px;line-height:11px;letter-spacing:0.25px;color:#8d8d8d;">Ruler</div>
<div class="t" style="left:193.2px;top:56.5px;font-size:11px;line-height:11px;letter-spacing:0.24px;">Gridlines</div>
<div class="t" style="left:193.2px;top:78.5px;font-size:11px;line-height:11px;letter-spacing:0.05px;color:#8d8d8d;">Message Bar</div>
<div class="t" style="left:286.2px;top:34.5px;font-size:11px;line-height:11px;letter-spacing:0.18px;">Formula Bar</div>
<div class="t" style="left:286.2px;top:56.5px;font-size:11px;line-height:11px;letter-spacing:0.33px;">Headings</div>
<div class="t" style="left:234.0px;top:98.7px;font-size:11px;line-height:11px;letter-spacing:0.50px;color:#3e6aaa;">Show/Hide</div>
<div class="t" style="left:370.5px;top:69.2px;font-size:11px;line-height:11px;letter-spacing:0.59px;">Zoom</div>
<div class="t" style="left:413.9px;top:69.2px;font-size:11px;line-height:11px;letter-spacing:-0.25px;">100%</div>
<div class="t" style="left:452.5px;top:69.2px;font-size:11px;line-height:11px;letter-spacing:0.51px;">Zoom to</div>
<div class="t" style="left:451.0px;top:81.8px;font-size:11px;line-height:11px;letter-spacing:0.24px;">Selection</div>
<div class="t" style="left:418.5px;top:98.7px;font-size:11px;line-height:11px;letter-spacing:0.52px;color:#3e6aaa;">Zoom</div>
<div class="t" style="left:534.0px;top:34.5px;font-size:11px;line-height:11px;letter-spacing:0.67px;">New Window</div>
<div class="t" style="left:534.0px;top:56.5px;font-size:11px;line-height:11px;letter-spacing:0.32px;">Arrange All</div>
<div class="t" style="left:534.0px;top:78.5px;font-size:11px;line-height:11px;letter-spacing:-0.23px;">Freeze Panes</div>
<div class="t" style="left:635.2px;top:34.5px;font-size:11px;line-height:11px;letter-spacing:0.47px;">Split</div>
<div class="t" style="left:635.2px;top:56.5px;font-size:11px;line-height:11px;letter-spacing:0.46px;">Hide</div>
<div class="t" style="left:635.2px;top:78.5px;font-size:11px;line-height:11px;letter-spacing:0.59px;color:#8d8d8d;">Unhide</div>
<div class="t" style="left:733.8px;top:69.2px;font-size:11px;line-height:11px;letter-spacing:-0.49px;">Save</div>
<div class="t" style="left:717.5px;top:81.8px;font-size:11px;line-height:11px;letter-spacing:0.18px;">Workspace</div>
<div class="t" style="left:790.1px;top:69.2px;font-size:11px;line-height:11px;letter-spacing:0.30px;">Switch</div>
<div class="t" style="left:779.1px;top:81.8px;font-size:11px;line-height:11px;letter-spacing:0.75px;">Windows</div>
<div class="t" style="left:55.5px;top:123.7px;font-size:11.5px;line-height:11.5px;letter-spacing:0.30px;color:#000;">C7</div>
<div class="t" style="left:294.6px;top:123.7px;font-size:11.5px;line-height:11.5px;color:#000;">6</div>
<div class="t" style="left:565.9px;top:100.5px;font-size:11px;line-height:11px;letter-spacing:-0.25px;font-weight:bold;color:#00156e;z-index:5;"><u>F</u>reeze Panes</div>
<div class="t" style="left:566.1px;top:115.9px;font-size:11px;line-height:11px;letter-spacing:0.28px;color:#00156e;z-index:5;">Keep rows and columns visible while the rest of</div>
<div class="t" style="left:566.1px;top:128.9px;font-size:11px;line-height:11px;letter-spacing:0.25px;color:#00156e;z-index:5;">the worksheet scrolls (based on current selection).</div>
<div class="t" style="left:565.9px;top:145.5px;font-size:11px;line-height:11px;letter-spacing:-0.07px;font-weight:bold;color:#00156e;z-index:5;">Freeze Top <u>R</u>ow</div>
<div class="t" style="left:566.1px;top:160.9px;font-size:11px;line-height:11px;letter-spacing:0.40px;color:#00156e;z-index:5;">Keep the top row visible while scrolling through</div>
<div class="t" style="left:566.1px;top:173.9px;font-size:11px;line-height:11px;letter-spacing:0.44px;color:#00156e;z-index:5;">the rest of the worksheet.</div>
<div class="t" style="left:565.9px;top:190.5px;font-size:11px;line-height:11px;letter-spacing:-0.19px;font-weight:bold;color:#00156e;z-index:5;">Freeze First <u>C</u>olumn</div>
<div class="t" style="left:566.1px;top:205.9px;font-size:11px;line-height:11px;letter-spacing:0.31px;color:#00156e;z-index:5;">Keep the first column visible while scrolling</div>
<div class="t" style="left:566.1px;top:218.9px;font-size:11px;line-height:11px;letter-spacing:0.48px;color:#00156e;z-index:5;">through the rest of the worksheet.</div>
<div class="t" style="left:32.7px;top:178.2px;font-size:13.5px;line-height:13.5px;letter-spacing:-0.57px;color:#6a6a6a;">java2s</div>
<div class="t" style="left:81.5px;top:577.1px;font-size:13px;line-height:13px;letter-spacing:0.35px;font-weight:bold;color:#1f3e7b;">Sheet1</div>
<div class="t" style="left:144.0px;top:577.1px;font-size:13px;line-height:13px;letter-spacing:-0.14px;color:#1f3e7b;">Sheet2</div>
<div class="t" style="left:204.1px;top:577.1px;font-size:13px;line-height:13px;letter-spacing:-0.20px;color:#1f3e7b;">Sheet3</div>
<div class="t" style="left:56.9px;top:201.8px;font-size:13px;line-height:13px;color:#20262e;">A</div>
<div class="t" style="left:119.7px;top:201.8px;font-size:13px;line-height:13px;color:#20262e;">B</div>
<div class="t" style="left:209.3px;top:201.8px;font-size:13px;line-height:13px;color:#20262e;">C</div>
<div class="t" style="left:335.8px;top:201.8px;font-size:13px;line-height:13px;color:#20262e;">D</div>
<div class="t" style="left:458.7px;top:201.8px;font-size:13px;line-height:13px;color:#20262e;">E</div>
<div class="t" style="left:19.6px;top:221.8px;font-size:13px;line-height:13px;color:#20262e;">1</div>
<div class="t" style="left:38.1px;top:221.8px;font-size:13px;line-height:13px;letter-spacing:0.70px;color:#3f3f76;">Item</div>
<div class="t" style="left:89.2px;top:221.8px;font-size:13px;line-height:13px;letter-spacing:0.21px;color:#3f3f76;">Start Date</div>
<div class="t" style="left:163.5px;top:221.8px;font-size:13px;line-height:13px;letter-spacing:0.35px;color:#3f3f76;">January Visitors</div>
<div class="t" style="left:268.4px;top:221.8px;font-size:13px;line-height:13px;letter-spacing:0.43px;color:#3f3f76;">Vistors in First Quarter</div>
<div class="t" style="left:416.1px;top:221.8px;font-size:13px;line-height:13px;letter-spacing:0.44px;color:#3f3f76;">Yearly Quarter</div>
<div class="t" style="left:19.6px;top:241.8px;font-size:13px;line-height:13px;color:#20262e;">2</div>
<div class="t" style="left:38.1px;top:241.8px;font-size:13px;line-height:13px;letter-spacing:0.81px;color:#000;">Item A</div>
<div class="t" style="left:105.8px;top:241.8px;font-size:13px;line-height:13px;letter-spacing:0.40px;color:#000;">9/9/2007</div>
<div class="t" style="left:257.0px;top:241.8px;font-size:13px;line-height:13px;color:#000;">1</div>
<div class="t" style="left:398.0px;top:241.8px;font-size:13px;line-height:13px;letter-spacing:-0.27px;color:#000;">12</div>
<div class="t" style="left:495.0px;top:241.8px;font-size:13px;line-height:13px;letter-spacing:-0.27px;color:#000;">34</div>
<div class="t" style="left:519.2px;top:241.8px;font-size:13px;line-height:13px;color:#000;">$</div>
<div class="t" style="left:535.3px;top:241.8px;font-size:13px;line-height:13px;letter-spacing:-0.17px;color:#000;">1.00</div>
<div class="t" style="left:19.6px;top:261.8px;font-size:13px;line-height:13px;color:#20262e;">3</div>
<div class="t" style="left:38.1px;top:261.8px;font-size:13px;line-height:13px;letter-spacing:0.52px;color:#000;">Item B</div>
<div class="t" style="left:91.8px;top:261.8px;font-size:13px;line-height:13px;letter-spacing:0.26px;color:#000;">10/10/2007</div>
<div class="t" style="left:257.0px;top:261.8px;font-size:13px;line-height:13px;color:#000;">2</div>
<div class="t" style="left:398.0px;top:261.8px;font-size:13px;line-height:13px;letter-spacing:0.70px;color:#000;">11</div>
<div class="t" style="left:495.0px;top:261.8px;font-size:13px;line-height:13px;letter-spacing:-0.27px;color:#000;">54</div>
<div class="t" style="left:519.2px;top:261.8px;font-size:13px;line-height:13px;color:#000;">$</div>
<div class="t" style="left:535.3px;top:261.8px;font-size:13px;line-height:13px;letter-spacing:-0.17px;color:#000;">2.00</div>
<div class="t" style="left:19.6px;top:281.8px;font-size:13px;line-height:13px;color:#20262e;">4</div>
<div class="t" style="left:38.1px;top:281.8px;font-size:13px;line-height:13px;letter-spacing:0.38px;color:#000;">Item C</div>
<div class="t" style="left:91.8px;top:281.8px;font-size:13px;line-height:13px;letter-spacing:0.47px;color:#000;">11/11/2007</div>
<div class="t" style="left:257.0px;top:281.8px;font-size:13px;line-height:13px;color:#000;">3</div>
<div class="t" style="left:398.0px;top:281.8px;font-size:13px;line-height:13px;letter-spacing:-0.27px;color:#000;">10</div>
<div class="t" style="left:495.0px;top:281.8px;font-size:13px;line-height:13px;letter-spacing:-0.27px;color:#000;">69</div>
<div class="t" style="left:519.2px;top:281.8px;font-size:13px;line-height:13px;color:#000;">$</div>
<div class="t" style="left:535.3px;top:281.8px;font-size:13px;line-height:13px;letter-spacing:-0.17px;color:#000;">3.00</div>
<div class="t" style="left:19.6px;top:301.8px;font-size:13px;line-height:13px;color:#20262e;">5</div>
<div class="t" style="left:38.1px;top:301.8px;font-size:13px;line-height:13px;letter-spacing:0.60px;color:#000;">Item D</div>
<div class="t" style="left:105.8px;top:301.8px;font-size:13px;line-height:13px;letter-spacing:0.40px;color:#000;">1/1/2008</div>
<div class="t" style="left:257.0px;top:301.8px;font-size:13px;line-height:13px;color:#000;">4</div>
<div class="t" style="left:405.0px;top:301.8px;font-size:13px;line-height:13px;color:#000;">9</div>
<div class="t" style="left:495.0px;top:301.8px;font-size:13px;line-height:13px;letter-spacing:-0.27px;color:#000;">68</div>
<div class="t" style="left:519.2px;top:301.8px;font-size:13px;line-height:13px;color:#000;">$</div>
<div class="t" style="left:535.3px;top:301.8px;font-size:13px;line-height:13px;letter-spacing:-0.17px;color:#000;">4.00</div>
<div class="t" style="left:19.6px;top:321.8px;font-size:13px;line-height:13px;color:#20262e;">6</div>
<div class="t" style="left:38.1px;top:321.8px;font-size:13px;line-height:13px;letter-spacing:0.32px;color:#000;">Item E</div>
<div class="t" style="left:105.8px;top:321.8px;font-size:13px;line-height:13px;letter-spacing:0.40px;color:#000;">2/2/2008</div>
<div class="t" style="left:257.0px;top:321.8px;font-size:13px;line-height:13px;color:#000;">5</div>
<div class="t" style="left:405.0px;top:321.8px;font-size:13px;line-height:13px;color:#000;">8</div>
<div class="t" style="left:495.0px;top:321.8px;font-size:13px;line-height:13px;letter-spacing:-0.27px;color:#000;">67</div>
<div class="t" style="left:519.2px;top:321.8px;font-size:13px;line-height:13px;color:#000;">$</div>
<div class="t" style="left:535.3px;top:321.8px;font-size:13px;line-height:13px;letter-spacing:-0.17px;color:#000;">5.00</div>
<div class="t" style="left:19.6px;top:341.8px;font-size:13px;line-height:13px;color:#20262e;">7</div>
<div class="t" style="left:38.1px;top:341.8px;font-size:13px;line-height:13px;letter-spacing:0.41px;color:#000;">Item F</div>
<div class="t" style="left:105.8px;top:341.8px;font-size:13px;line-height:13px;letter-spacing:0.40px;color:#000;">5/5/2006</div>
<div class="t" style="left:257.0px;top:341.8px;font-size:13px;line-height:13px;color:#000;">6</div>
<div class="t" style="left:405.0px;top:341.8px;font-size:13px;line-height:13px;color:#000;">7</div>
<div class="t" style="left:495.0px;top:341.8px;font-size:13px;line-height:13px;letter-spacing:-0.27px;color:#000;">51</div>
<div class="t" style="left:519.2px;top:341.8px;font-size:13px;line-height:13px;color:#000;">$</div>
<div class="t" style="left:535.3px;top:341.8px;font-size:13px;line-height:13px;letter-spacing:-0.17px;color:#000;">6.00</div>
<div class="t" style="left:19.6px;top:361.8px;font-size:13px;line-height:13px;color:#20262e;">8</div>
<div class="t" style="left:38.1px;top:361.8px;font-size:13px;line-height:13px;letter-spacing:0.52px;color:#000;">Item G</div>
<div class="t" style="left:91.8px;top:361.8px;font-size:13px;line-height:13px;letter-spacing:0.26px;color:#000;">12/12/2006</div>
<div class="t" style="left:257.0px;top:361.8px;font-size:13px;line-height:13px;color:#000;">7</div>
<div class="t" style="left:398.0px;top:361.8px;font-size:13px;line-height:13px;letter-spacing:-0.27px;color:#000;">12</div>
<div class="t" style="left:495.0px;top:361.8px;font-size:13px;line-height:13px;letter-spacing:-0.27px;color:#000;">52</div>
<div class="t" style="left:519.2px;top:361.8px;font-size:13px;line-height:13px;color:#000;">$</div>
<div class="t" style="left:535.3px;top:361.8px;font-size:13px;line-height:13px;letter-spacing:-0.17px;color:#000;">7.00</div>
<div class="t" style="left:19.6px;top:381.8px;font-size:13px;line-height:13px;color:#20262e;">9</div>
<div class="t" style="left:38.1px;top:381.8px;font-size:13px;line-height:13px;letter-spacing:0.66px;color:#000;">Item H</div>
<div class="t" style="left:98.8px;top:381.8px;font-size:13px;line-height:13px;letter-spacing:0.32px;color:#000;">1/10/2004</div>
<div class="t" style="left:257.0px;top:381.8px;font-size:13px;line-height:13px;color:#000;">8</div>
<div class="t" style="left:398.0px;top:381.8px;font-size:13px;line-height:13px;letter-spacing:-0.27px;color:#000;">13</div>
<div class="t" style="left:495.0px;top:381.8px;font-size:13px;line-height:13px;letter-spacing:-0.27px;color:#000;">53</div>
<div class="t" style="left:519.2px;top:381.8px;font-size:13px;line-height:13px;color:#000;">$</div>
<div class="t" style="left:535.3px;top:381.8px;font-size:13px;line-height:13px;letter-spacing:-0.17px;color:#000;">8.00</div>
<div class="t" style="left:15.7px;top:401.8px;font-size:13px;line-height:13px;letter-spacing:0.53px;color:#20262e;">10</div>
<div class="t" style="left:38.1px;top:401.8px;font-size:13px;line-height:13px;letter-spacing:0.60px;color:#000;">Item I</div>
<div class="t" style="left:91.8px;top:401.8px;font-size:13px;line-height:13px;letter-spacing:0.26px;color:#000;">10/12/2007</div>
<div class="t" style="left:257.0px;top:401.8px;font-size:13px;line-height:13px;color:#000;">9</div>
<div class="t" style="left:398.0px;top:401.8px;font-size:13px;line-height:13px;letter-spacing:-0.27px;color:#000;">14</div>
<div class="t" style="left:495.0px;top:401.8px;font-size:13px;line-height:13px;letter-spacing:-0.27px;color:#000;">54</div>
<div class="t" style="left:519.2px;top:401.8px;font-size:13px;line-height:13px;color:#000;">$</div>
<div class="t" style="left:535.3px;top:401.8px;font-size:13px;line-height:13px;letter-spacing:-0.17px;color:#000;">9.00</div>
<div class="t" style="left:15.7px;top:421.8px;font-size:13px;line-height:13px;letter-spacing:1.50px;color:#20262e;">11</div>
<div class="t" style="left:38.1px;top:421.8px;font-size:13px;line-height:13px;letter-spacing:0.22px;color:#000;">Item J</div>
<div class="t" style="left:105.8px;top:421.8px;font-size:13px;line-height:13px;letter-spacing:0.40px;color:#000;">4/9/2009</div>
<div class="t" style="left:257.0px;top:421.8px;font-size:13px;line-height:13px;color:#000;">0</div>
<div class="t" style="left:398.0px;top:421.8px;font-size:13px;line-height:13px;letter-spacing:-0.27px;color:#000;">15</div>
<div class="t" style="left:495.0px;top:421.8px;font-size:13px;line-height:13px;letter-spacing:-0.27px;color:#000;">55</div>
<div class="t" style="left:519.2px;top:421.8px;font-size:13px;line-height:13px;color:#000;">$</div>
<div class="t" style="left:535.3px;top:421.8px;font-size:13px;line-height:13px;letter-spacing:-0.17px;color:#000;">1.00</div>
<div class="t" style="left:15.7px;top:441.8px;font-size:13px;line-height:13px;letter-spacing:0.53px;color:#20262e;">12</div>
<div class="t" style="left:38.1px;top:441.8px;font-size:13px;line-height:13px;letter-spacing:0.48px;color:#000;">Item K</div>
<div class="t" style="left:98.8px;top:441.8px;font-size:13px;line-height:13px;letter-spacing:0.32px;color:#000;">12/1/2010</div>
<div class="t" style="left:250.0px;top:441.8px;font-size:13px;line-height:13px;letter-spacing:0.70px;color:#000;">11</div>
<div class="t" style="left:398.0px;top:441.8px;font-size:13px;line-height:13px;letter-spacing:-0.27px;color:#000;">16</div>
<div class="t" style="left:495.0px;top:441.8px;font-size:13px;line-height:13px;letter-spacing:-0.27px;color:#000;">56</div>
<div class="t" style="left:519.2px;top:441.8px;font-size:13px;line-height:13px;color:#000;">$</div>
<div class="t" style="left:528.3px;top:441.8px;font-size:13px;line-height:13px;letter-spacing:0.06px;color:#000;">11.00</div>
<div class="t" style="left:15.7px;top:461.8px;font-size:13px;line-height:13px;letter-spacing:0.53px;color:#20262e;">13</div>
<div class="t" style="left:38.1px;top:461.8px;font-size:13px;line-height:13px;letter-spacing:0.47px;color:#000;">Item L</div>
<div class="t" style="left:91.8px;top:461.8px;font-size:13px;line-height:13px;letter-spacing:0.37px;color:#000;">11/12/2005</div>
<div class="t" style="left:257.0px;top:461.8px;font-size:13px;line-height:13px;color:#000;">2</div>
<div class="t" style="left:398.0px;top:461.8px;font-size:13px;line-height:13px;letter-spacing:-0.27px;color:#000;">17</div>
<div class="t" style="left:495.0px;top:461.8px;font-size:13px;line-height:13px;letter-spacing:-0.27px;color:#000;">57</div>
<div class="t" style="left:519.2px;top:461.8px;font-size:13px;line-height:13px;color:#000;">$</div>
<div class="t" style="left:528.3px;top:461.8px;font-size:13px;line-height:13px;letter-spacing:-0.19px;color:#000;">12.00</div>
<div class="t" style="left:15.7px;top:481.8px;font-size:13px;line-height:13px;letter-spacing:0.53px;color:#20262e;">14</div>
<div class="t" style="left:15.7px;top:501.8px;font-size:13px;line-height:13px;letter-spacing:0.53px;color:#20262e;">15</div>
<div class="t" style="left:15.7px;top:521.8px;font-size:13px;line-height:13px;letter-spacing:0.53px;color:#20262e;">16</div>
<div class="t" style="left:15.7px;top:541.8px;font-size:13px;line-height:13px;letter-spacing:0.53px;color:#20262e;">17</div>
<div class="t" style="left:15.7px;top:561.8px;font-size:13px;line-height:13px;letter-spacing:0.53px;color:#20262e;">18</div>
</body></html>
